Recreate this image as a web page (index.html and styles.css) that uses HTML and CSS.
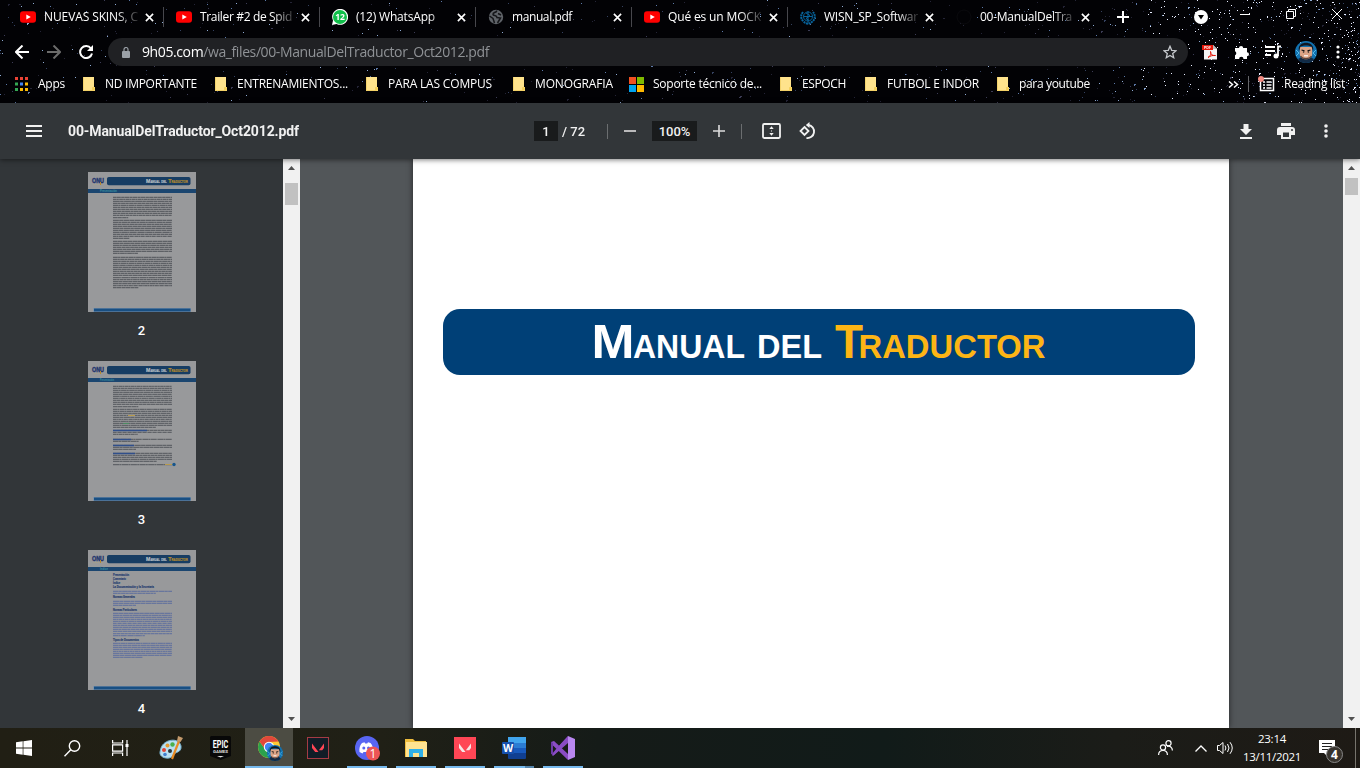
FILE: index.html
```html
<!DOCTYPE html>
<html lang="es">
<head>
<meta charset="utf-8">
<title>00-ManualDelTraductor_Oct2012.pdf</title>
<link rel="stylesheet" href="styles.css">
</head>
<body>
<svg width="0" height="0" class="defs">
  <symbol id="yt" viewBox="0 0 16 16"><rect y="2.3" width="16" height="11.4" rx="3" fill="#f00"/><path d="M6.3 5.4v5.2L10.8 8z" fill="#fff"/></symbol>
  <symbol id="x" viewBox="0 0 10 10"><path d="M1 1l8 8M9 1L1 9" stroke="#fff" stroke-width="1.8"/></symbol>
  <symbol id="folder" viewBox="0 0 12 14"><path d="M0 0h11v10h1v4H0z" fill="#ffe38c"/><path d="M.4 0v13.5H9.5V10.5h2" fill="none" stroke="#f0cd5e" stroke-width=".8"/><rect x="9.5" y="10.3" width="2.3" height="3.4" fill="#f5cf55"/></symbol>
  <symbol id="valo" viewBox="0 0 22 22"><path d="M5 6.5l6.5 8.500H8.200L5 11zM17 6.500V11l-1.800 2.200h-3.300z"/></symbol>
  <symbol id="face" viewBox="0 0 22 22"><circle cx="11" cy="11" r="11" fill="#1272b0"/><path d="M1 9l3 3-3 3M21 9l-3 3 3 3" stroke="#52b9ea" fill="none"/><path d="M3 19c3-5 13-5 16 0-4 4-12 4-16 0z" fill="#112a45"/><path d="M4.800 6h12.400v7c0 7-12.400 7-12.400 0z" fill="#dca486"/><path d="M4 10C1-1 21-1 18 10l-1.500-4.500c-3-1.500-8-1.500-11 0z" fill="#111620"/><path d="M6.500 9l3 .8M15.500 9l-3 .8" stroke="#111" stroke-width="1.200"/><circle cx="8.600" cy="11" r=".8" fill="#222"/><circle cx="13.400" cy="11" r=".8" fill="#222"/><path d="M9 14.800h4" stroke="#fff" stroke-width="1.200"/><path d="M5.500 15c2 3.500 9 3.500 11 0" stroke="#5b4238" fill="none" stroke-width="1.200"/></symbol>
</svg>

<header class="chrome">
  <canvas class="stars" id="stars" width="1360" height="103"></canvas>
  <div class="tabs">
    <div class="tab"><svg class="fav"><use href="#yt"/></svg><div class="ttl"><span data-w="94">NUEVAS SKINS, C</span></div><svg class="x"><use href="#x"/></svg></div>
    <div class="tab"><svg class="fav"><use href="#yt"/></svg><div class="ttl"><span data-w="92">Trailer #2 de Spid</span></div><svg class="x"><use href="#x"/></svg></div>
    <div class="tab"><svg class="fav" viewBox="0 0 16 16"><path d="M0 16l1-4.500A8 8 0 1 1 4.500 15z" fill="#fff"/><circle cx="8" cy="8" r="7" fill="#10c04a"/><text x="8" y="11.200" font-size="8.500" font-weight="700" text-anchor="middle" fill="#fff">12</text></svg><div class="ttl"><span data-w="79">(12) WhatsApp</span></div><svg class="x"><use href="#x"/></svg></div>
    <div class="tab"><svg class="fav" viewBox="0 0 16 16"><circle cx="8" cy="8" r="7.200" fill="#5f6368"/><path d="M8.500 1.500c1 2-4 1.500-3.500 4 .3 1.500 4 .5 4 3L12.500 9 9.500 14M1.500 7l3.500 2.500L6.500 14M10 4.500l3 1.500" stroke="#151619" stroke-width="1.500" fill="none"/></svg><div class="ttl"><span data-w="60">manual.pdf</span></div><svg class="x"><use href="#x"/></svg></div>
    <div class="tab"><svg class="fav"><use href="#yt"/></svg><div class="ttl"><span data-w="93">Qué es un MOCK</span></div><svg class="x"><use href="#x"/></svg></div>
    <div class="tab"><svg class="fav" viewBox="0 0 16 16" fill="none" stroke="#07639b"><circle cx="8" cy="7.500" r="4.500"/><path d="M3 3C-1 8 2 13 8 15c6-2 9-7 5-12" stroke-width="2" stroke-dasharray="2 .700"/><path d="M8 2v12M3.500 7.500h9M6 4l4 2.500-4 3 3 2"/></svg><div class="ttl"><span data-w="94">WISN_SP_Softwar</span></div><svg class="x"><use href="#x"/></svg></div>
    <div class="tab active"><svg class="fav" viewBox="0 0 16 16"><circle cx="8" cy="8" r="7" fill="none" stroke="#0b0b0e"/></svg><div class="ttl"><span data-w="92">00-ManualDelTra</span></div><svg class="x"><use href="#x"/></svg></div>
    <svg class="plus" viewBox="0 0 12 12"><path d="M6 0v12M0 6h12" stroke="#fff" stroke-width="2"/></svg>
    <div class="win">
      <svg width="14" height="14" viewBox="0 0 14 14"><circle cx="7" cy="7" r="7" fill="#fff"/><path d="M4 5h6L7 9.500z" fill="#000"/></svg>
      <svg width="10" height="10" viewBox="0 0 10 10"><path d="M0 5.500h10" stroke="#fff"/></svg>
      <svg width="10" height="10" viewBox="0 0 10 10" fill="none" stroke="#fff"><path d="M.5 2.500h7v7h-7zM2.500 2.500v-2h7v7h-2"/></svg>
      <svg width="10" height="10" viewBox="0 0 10 10"><path d="M0 0l10 10M10 0L0 10" stroke="#fff"/></svg>
    </div>
  </div>
  <div class="nav">
    <svg width="14" height="14" viewBox="0 0 14 14" fill="none" stroke="#fff" stroke-width="2"><path d="M14 7H1M7.500 .5L1 7l6.500 6.500"/></svg>
    <svg width="14" height="14" viewBox="0 0 14 14" fill="none" stroke="#6b6b6b" stroke-width="2"><path d="M0 7h13M6.500 .5L13 7l-6.500 6.500"/></svg>
    <svg width="14" height="14" viewBox="0 0 14 14"><path d="M12 3.500A6 6 0 1 0 13 8.500" fill="none" stroke="#fff" stroke-width="2"/><path d="M14 0v6H8z" fill="#fff"/></svg>
    <div class="omni">
      <svg width="8" height="11" viewBox="0 0 8 11"><rect y="4" width="8" height="7" rx="1" fill="#9aa0a6"/><path d="M2 4V2.500a2 2 0 0 1 4 0V4" fill="none" stroke="#9aa0a6" stroke-width="1.200"/></svg>
      <div class="url"><span data-w="347"><b>9h05.com</b>/wa_files/00-ManualDelTraductor_Oct2012.pdf</span></div>
      <svg width="14" height="14" viewBox="0 0 14 14"><path d="M7 1.300l1.700 4 4.300.400-3.300 2.800 1 4.200L7 10.500l-3.700 2.200 1-4.200L1 5.700l4.300-.400z" fill="none" stroke="#c6c9cd" stroke-width="1.300"/></svg>
    </div>
    <div class="ext">
      <svg width="16" height="16" viewBox="0 0 16 16"><path d="M2 1h9l4 4v10.500H2z" fill="#f4f4f4"/><path d="M11 1l4 4h-4z" fill="#bbb"/><rect x="0" y="1" width="11" height="5" fill="#e3170a"/><text x="2" y="4.800" font-size="3.600" font-weight="700" fill="#fff">PDF</text><path d="M6 13.500c3-2 3-4 2.500-6 0 3 2 4.500 5 4-3-.500-5 .500-7.500 2z" fill="none" stroke="#e3170a"/></svg>
      <svg width="16" height="16" viewBox="0 0 16 16"><path d="M1 4h4a2 2 0 1 1 4.200 0H13v4.200a2 2 0 1 1 0 4V15H9.500a2.200 2.200 0 0 0-4.400 0H1v-3.800a2.200 2.200 0 0 0 0-4z" fill="#fff"/></svg>
      <svg width="16" height="14" viewBox="0 0 16 14"><path d="M0 2h10M0 6h10M0 10h6M16 1.500h-3V11" fill="none" stroke="#fff" stroke-width="1.800"/><circle cx="11" cy="11" r="2.500" fill="#fff"/></svg>
      <svg width="22" height="22"><use href="#face"/></svg>
      <svg width="4" height="14" viewBox="0 0 4 14" fill="#fff"><circle cx="2" cy="2" r="1.600"/><circle cx="2" cy="7" r="1.600"/><circle cx="2" cy="12" r="1.600"/></svg>
    </div>
  </div>
  <div class="marks">
    <div class="mk apps"><svg width="13" height="14" viewBox="0 0 13 14"><path d="M0 0h3v3H0zM5 0h3v3H5zM10 0h3v3h-3z" fill="#ea4335"/><path d="M0 5.500h3v3H0z" fill="#34a853"/><path d="M5 5.500h3v3H5z" fill="#4285f4"/><path d="M10 5.500h3v3h-3zM5 11h3v3H5zM10 11h3v3h-3z" fill="#fbbc05"/><path d="M0 11h3v3H0z" fill="#34a853"/></svg><span data-w="27">Apps</span></div>
    <div class="mk"><svg class="fo"><use href="#folder"/></svg><span data-w="92">ND IMPORTANTE</span></div>
    <div class="mk"><svg class="fo"><use href="#folder"/></svg><span data-w="111">ENTRENAMIENTOS...</span></div>
    <div class="mk"><svg class="fo"><use href="#folder"/></svg><span data-w="104">PARA LAS COMPUS</span></div>
    <div class="mk"><svg class="fo"><use href="#folder"/></svg><span data-w="78">MONOGRAFIA</span></div>
    <div class="mk ms"><svg width="15" height="15" viewBox="0 0 15 15"><path d="M0 0h7v7H0z" fill="#f25022"/><path d="M8 0h7v7H8z" fill="#7fba00"/><path d="M0 8h7v7H0z" fill="#00a4ef"/><path d="M8 8h7v7H8z" fill="#ffb900"/></svg><span data-w="109">Soporte técnico de...</span></div>
    <div class="mk"><svg class="fo"><use href="#folder"/></svg><span data-w="44">ESPOCH</span></div>
    <div class="mk"><svg class="fo"><use href="#folder"/></svg><span data-w="92">FUTBOL E INDOR</span></div>
    <div class="mk"><svg class="fo"><use href="#folder"/></svg><span data-w="71">para youtube</span></div>
    <svg width="11" height="7" viewBox="0 0 11 7" fill="none" stroke="#fff" stroke-width="1.500"><path d="M1 .500l3.500 3L1 6.500M6 .500l3.500 3L6 6.500"/></svg>
    <div class="mk list"><svg width="17" height="16" viewBox="0 0 17 16"><path d="M3 2.500h12.500v12H2.500v-12z" fill="none" stroke="#fff" stroke-width="1.500"/><path d="M5 6h2M5 9h2M5 12h2M8.500 6h5M8.500 9h5M8.500 12h5" stroke="#fff" stroke-width="1.600"/><circle cx="3" cy="3" r="3" fill="#f28b82"/></svg><span data-w="61">Reading list</span></div>
  </div>
</header>

<div class="pdfbar">
  <svg width="16" height="12" viewBox="0 0 16 12"><path d="M0 1h16M0 6h16M0 11h16" stroke="#f1f1f1" stroke-width="2"/></svg>
  <div class="name"><span data-w="231">00-ManualDelTraductor_Oct2012.pdf</span></div>
  <div class="mid">
    <span class="box pg">1</span><span class="total">/ 72</span><i class="vr"></i>
    <svg class="minus" width="12" height="12" viewBox="0 0 12 12"><path d="M0 6h12" stroke="#dcdcdc" stroke-width="1.600"/></svg>
    <span class="box zm">100%</span>
    <svg class="add" width="12" height="12" viewBox="0 0 12 12"><path d="M0 6h12M6 0v12" stroke="#dcdcdc" stroke-width="1.600"/></svg>
    <i class="vr"></i>
    <svg class="fitp" width="19" height="16" viewBox="0 0 19 16"><rect x="1" y="1" width="17" height="14" rx="1.200" fill="none" stroke="#f1f1f1" stroke-width="1.800"/><path d="M9.500 3.300l2.200 2.700H7.300zM9.500 12.700l2.200-2.700H7.300zM9 7.500h1v1H9z" fill="#f1f1f1"/></svg>
    <svg class="rot" width="18" height="18" viewBox="0 0 18 18" fill="none" stroke="#f1f1f1" stroke-width="1.800"><path d="M5.500 5l4 4-4 4-4-4z"/><path d="M9.500 3a6.500 6.500 0 1 1-2 13"/><path d="M10.500 0v6L6.800 3z" fill="#f1f1f1" stroke="none"/></svg>
  </div>
  <div class="acts">
    <svg width="12" height="15" viewBox="0 0 12 15" fill="#f1f1f1"><path d="M3.500 0h5v5H12l-6 6-6-6h3.500zM0 13h12v2H0z"/></svg>
    <svg width="18" height="16" viewBox="0 0 18 16"><path d="M4 0h10v3H4zM3 4h12a3 3 0 0 1 3 3v5h-4v4H4v-4H0V7a3 3 0 0 1 3-3z" fill="#f1f1f1"/><path d="M6 9.500h6V14H6z" fill="#323639"/><circle cx="15" cy="7" r="1" fill="#323639"/></svg>
    <svg width="4" height="14" viewBox="0 0 4 14" fill="#f1f1f1"><circle cx="2" cy="2" r="1.800"/><circle cx="2" cy="7" r="1.800"/><circle cx="2" cy="12" r="1.800"/></svg>
  </div>
</div>

<main class="body">
  <aside class="side">
    <figure><svg class="thumb" data-k="0" width="108" height="140" viewBox="0 0 108 140"></svg><figcaption>2</figcaption></figure>
    <figure><svg class="thumb" data-k="1" width="108" height="140" viewBox="0 0 108 140"></svg><figcaption>3</figcaption></figure>
    <figure><svg class="thumb" data-k="2" width="108" height="140" viewBox="0 0 108 140"></svg><figcaption>4</figcaption></figure>
  </aside>
  <div class="sb a"><svg class="ar" viewBox="0 0 7 4"><path d="M0 4h7L3.500 0z" fill="#505050"/></svg><i></i><svg class="ar dn" viewBox="0 0 7 4"><path d="M0 0h7L3.500 4z" fill="#505050"/></svg></div>
  <section class="view">
    <div class="page">
      <div class="banner">
        <svg width="752" height="66" viewBox="0 0 752 66" class="head">
          <g fill="#fff"><text x="148.500" y="49" font-size="48" textLength="43" lengthAdjust="spacingAndGlyphs">M</text><text x="190" y="49" font-size="34" textLength="112" lengthAdjust="spacingAndGlyphs">ANUAL</text><text x="314" y="49" font-size="34" textLength="65" lengthAdjust="spacingAndGlyphs">DEL</text></g>
          <g fill="#fdb515"><text x="392" y="49" font-size="48" textLength="28" lengthAdjust="spacingAndGlyphs">T</text><text x="415.500" y="49" font-size="34" textLength="187" lengthAdjust="spacingAndGlyphs">RADUCTOR</text></g>
        </svg>
      </div>
    </div>
  </section>
  <div class="sb b"><svg class="ar" viewBox="0 0 7 4"><path d="M0 4h7L3.500 0z" fill="#505050"/></svg><i></i><svg class="ar dn" viewBox="0 0 7 4"><path d="M0 0h7L3.500 4z" fill="#505050"/></svg></div>
</main>

<footer class="task">
  <div class="sys"><svg width="16" height="16" viewBox="0 0 16 16" fill="#fff"><path d="M0 2.300L6.700 1.300v6.300H0zM7.400 1.200L16 0v7.600H7.400zM0 8.400h6.700v6.300L0 13.700zM7.400 8.400H16V16l-8.600-1.200z"/></svg></div>
  <div class="sys"><svg width="17" height="17" viewBox="0 0 17 17" fill="none" stroke="#fff" stroke-width="1.400"><circle cx="10.500" cy="6" r="5.200"/><path d="M6.800 9.700L.5 16.300"/></svg></div>
  <div class="sys"><svg width="17" height="16" viewBox="0 0 17 16" fill="none" stroke="#fff" stroke-width="1.200"><path d="M.6 0v3h10V0M.6 16v-3h10v3M.6 4.800h10v6.400H.6zM15 0v16"/><path d="M13.500 4h3v3h-3z" fill="#fff" stroke="none"/></svg></div>
  <div class="apps-row">
  <div class="app"><svg width="24" height="24" viewBox="0 0 24 24"><path d="M2 12C5 3 20 1 22 10c1 7-7 6-8 9-1 5-14 4-13-3z" fill="#b9dff1" stroke="#78b4d2"/><circle cx="5" cy="14" r="2" fill="#e04436"/><circle cx="8.500" cy="9.500" r="2" fill="#e59b31"/><circle cx="13.500" cy="8.500" r="2.200" fill="#4ab04b"/><circle cx="11" cy="15" r="2" fill="#26333a"/><circle cx="6" cy="18.500" r="1.800" fill="#3f7fd0"/><path d="M13 23l7-18" stroke="#e88b24" stroke-width="2.200"/><path d="M18 5l1-5 5 2-2.500 4z" fill="#c49a6c"/></svg></div>
  <div class="app"><svg width="21" height="24" viewBox="0 0 21 24"><path d="M1.500 0h18a1.500 1.500 0 0 1 1.500 1.500V20l-10.500 4L0 20V1.500A1.500 1.500 0 0 1 1.500 0z" fill="#080808"/><text x="2.800" y="12" font-size="11.500" font-weight="700" fill="#fff" textLength="15.500" lengthAdjust="spacingAndGlyphs" font-family="Roboto">EPIC</text><text x="3" y="17.300" font-size="4" font-weight="700" fill="#ddd" textLength="15" lengthAdjust="spacingAndGlyphs" font-family="Roboto">GAMES</text><path d="M7 20h7l-3.500 1.500z" fill="#ddd"/></svg></div>
  <div class="app on"><svg width="26" height="26" viewBox="0 0 26 26"><circle cx="12" cy="12" r="11" fill="#fcc934"/><path d="M2.500 6.500A11 11 0 0 0 12 23l4-8-8-1z" fill="#2ba24c"/><path d="M2.500 6.500A11 11 0 0 1 21.500 6.500L12 7l-4 7z" fill="#e0483b"/><circle cx="12" cy="12" r="5.200" fill="#fff"/><circle cx="12" cy="12" r="4.200" fill="#4285f4"/><svg x="10" y="10" width="16" height="16"><use href="#face"/></svg></svg></div>
  <div class="app"><svg width="22" height="22" viewBox="0 0 22 22"><rect x=".5" y=".5" width="21" height="21" fill="#111d27" stroke="#a53b45"/><use href="#valo" fill="#ff4655"/></svg></div>
  <div class="app run"><svg width="26" height="26" viewBox="0 0 26 26"><circle cx="13" cy="13" r="12" fill="#5865f2"/><path d="M5.500 17c-.5-4 .5-7 2.500-9l2.500-.7.7 1.200h2l.8-1.200 2.500.7c2 2 3 5 2.500 9l-3 1.500-1-1.500H9.500l-1 1.500z" fill="#fff"/><circle cx="9.800" cy="13" r="1.500" fill="#5865f2"/><circle cx="14.500" cy="13" r="1.500" fill="#5865f2"/><circle cx="19" cy="18.500" r="7" fill="#ed5555"/><text x="19" y="23" font-size="12" text-anchor="middle" fill="#fff">1</text></svg></div>
  <div class="app run"><svg width="22" height="20" viewBox="0 0 22 20"><path d="M0 1h8l2 2h11v16H0z" fill="#efbd3d"/><path d="M1 4h21v15H1z" fill="#ffe391"/><path d="M4 19v-8h14v8h-4v-4H8v4z" fill="#2fb0e8"/></svg></div>
  <div class="app run"><svg width="22" height="22" viewBox="0 0 22 22"><rect width="22" height="22" fill="#ff4655"/><use href="#valo" fill="#f5e6e6"/></svg></div>
  <div class="app run word"><svg width="24" height="22" viewBox="0 0 24 22"><rect x="6" width="18" height="22" rx="1" fill="#103f91"/><path d="M6 0h18v6H6z" fill="#41a5ee"/><path d="M6 6h18v5H6z" fill="#2b7cd3"/><path d="M6 11h18v5H6z" fill="#185abd"/><rect y="5" width="12" height="12" rx="1" fill="#1650ad"/><text x="6" y="14.800" font-size="10.500" font-weight="700" text-anchor="middle" fill="#fff" font-family="Open Sans">W</text></svg></div>
  <div class="app run"><svg width="24" height="24" viewBox="0 0 24 24"><path d="M17 0l7 3v18l-7 3z" fill="#b987f0"/><path d="M0 6l3-1 14 13v6L2 9.500z" fill="#8a4cc4"/><path d="M17 0v6L3 19l-3-1V6l2 1v9.500z" fill="#6c3aa5"/><path d="M17 0v7L2 20l-1-1 5-7z" fill="#8a4cc4"/></svg></div>
  </div>
  <div class="tray">
    <svg class="ppl" width="15" height="16" viewBox="0 0 15 16" fill="none" stroke="#fff" stroke-width="1.200"><circle cx="5" cy="7.500" r="2.600"/><path d="M.600 15c0-6 8.800-6 8.800 0"/><circle cx="10.500" cy="3.200" r="2.600"/><path d="M9 6.500c3-1 5.400 1 5.400 4"/></svg>
    <svg class="chev" width="12" height="7" viewBox="0 0 12 7" fill="none" stroke="#fff" stroke-width="1.300"><path d="M.5 6.500L6 1l5.500 5.500"/></svg>
    <svg class="vol" width="17" height="14" viewBox="0 0 17 14" fill="none" stroke="#fff"><path d="M.5 4.500h2L6 1.500v11L2.500 9.500h-2z"/><path d="M8 4.500q1.800 2.500 0 5M10.500 3q3 4 0 8M13 1.200q4.500 5.800 0 11.600"/></svg>
    <div class="clock"><span data-w="28">23:14</span><span data-w="58">13/11/2021</span></div>
    <div class="note"><svg width="16" height="17" viewBox="0 0 16 17"><path d="M0 0h16v13H9v4l-4-4H0z" fill="#fff"/><path d="M3 3.500h10M3 6.500h10M3 9.500h7" stroke="#222"/></svg><em>4</em></div>
    <i class="end"></i>
  </div>
</footer>
<script src="app.js"></script>
</body>
</html>
```
FILE: styles.css
```css
* { box-sizing: border-box; }
body { margin: 0; width: 1360px; height: 768px; overflow: hidden; display: flex; flex-direction: column; font-family: "Open Sans", "Noto Sans", sans-serif; font-size: 12px; color: #fff; background: #525659; }
svg { display: block; flex: none; }
.defs { position: absolute; }
span { white-space: nowrap; }
.chrome { position: relative; height: 103px; flex: none; background: #020205; }
.stars { position: absolute; left: 0; top: 0; }
.tabs, .nav, .marks { position: relative; display: flex; align-items: center; }
.tabs { height: 38px; padding: 0 0 4px 8px; }
.tab { width: 156px; height: 20px; padding-left: 12px; display: flex; align-items: center; border-right: 1px solid #47474c; }
.tab:nth-child(6), .tab.active { border-color: transparent; }
.fav { width: 16px; height: 16px; }
.ttl { width: 96px; margin-left: 8px; overflow: hidden; line-height: 20px; -webkit-mask-image: linear-gradient(90deg, #000 72px, transparent 98px); mask-image: linear-gradient(90deg, #000 72px, transparent 98px); }
.x { width: 9px; height: 9px; margin-left: 5px; }
.plus { width: 12px; height: 12px; margin-left: 17px; }
.win { display: grid; grid-template-columns: 46px 46px 46px 10px; margin-left: 65px; align-items: center; padding-bottom: 6px; }
.win svg:first-child { margin-top: 6px; }
.nav { height: 28px; padding-left: 15px; gap: 18px; }
.omni { width: 1080px; height: 28px; margin-left: -3px; padding: 0 11px 0 14px; border-radius: 14px; background: #202124; display: flex; align-items: center; }
.url { flex: 1; margin-left: 12px; font-size: 14px; line-height: 26px; color: #8f9296; }
.url b { font-weight: 400; color: #fff; }
.ext { display: grid; grid-template-columns: 32px 31px 30px 41px 4px; align-items: center; margin-left: -4px; }
.marks { height: 36px; padding-left: 15px; display: grid; grid-template-columns: 68px 132px 151px 147px 116px 151px 85px 132px 231px 20px 1fr; }
.mk { display: flex; align-items: center; line-height: 18px; }
.mk span { margin-left: 10px; }
.mk.ms span { margin-left: 9px; }
.fo { width: 12px; height: 14px; }
.list { border-left: 1px solid #66666a; padding-left: 9px; height: 16px; }
.list span { margin-left: 9px; }

.pdfbar { position: relative; z-index: 2; height: 56px; flex: none; display: grid; grid-template-columns: 42px 466px 706px 1fr; align-items: center; padding-left: 26px; background: #323639; box-shadow: 0 1px 5px rgba(0,0,0,.5); font-family: Roboto, sans-serif; font-weight: 500; color: #f1f1f1; font-size: 14px; }
.name { font-weight: 700; font-size: 14px; }
.mid { display: flex; align-items: center; font-size: 13px; }
.box { background: #191b1c; height: 20px; line-height: 21px; text-align: center; }
.pg { width: 24px; }
.zm { width: 45px; }
.total { width: 45px; margin-left: 4px; }
.vr { width: 1px; height: 15px; background: #6b6e70; }
.minus { margin: 0 16px; }
.add { margin: 0 16px; }
.fitp { margin-left: 20px; }
.rot { margin-left: 18px; }
.acts { display: grid; grid-template-columns: 37px 47px 4px; align-items: center; }

.body { flex: 1; display: flex; min-height: 0; }
.side { width: 283px; background: #323639; padding: 13px 0 0 88px; overflow: hidden; }
figure { margin: 0; width: 108px; height: 189px; }
.thumb { background: #98999b; }
figcaption { padding-right: 1px; text-align: center; font-family: Roboto, sans-serif; font-weight: 500; font-size: 13px; line-height: 37px; }
.sb { width: 17px; background: #f1f1f1; display: flex; flex-direction: column; align-items: center; padding: 7px 0; }
.sb i { width: 13px; background: #c1c1c1; }
.a i { height: 22px; margin-top: 13px; }
.b i { height: 17px; margin-top: 8px; }
.ar { width: 7px; height: 4px; }
.dn { margin-top: auto; }
.view { width: 1043px; padding-left: 113px; background: #525659; }
.page { width: 816px; height: 569px; background: #fff; padding: 150px 0 0 30px; box-shadow: 0 0 6px rgba(0,0,0,.55); clip-path: inset(0 -8px); }
.banner { width: 752px; height: 66px; border-radius: 17px; background: #004077; }
.head { font-family: "Liberation Sans", Arial, sans-serif; font-weight: 700; }

.task { height: 40px; flex: none; display: flex; background: linear-gradient(90deg, #211f14 0, #202016 28%, #151b18 44%, #111b19 65%, #1b1c18 82%, #1e1a15 100%); }
.sys { width: 48px; display: flex; justify-content: center; align-items: center; }
.apps-row { display: flex; gap: 1px; padding-left: 3px; }
.app { width: 48px; display: flex; justify-content: center; align-items: center; }
.on { background: #4c4c43; border-bottom: 2px solid #76b9ed; padding: 2px 0 0 2px; }
.run { background: linear-gradient(#76b9ed, #76b9ed) 4px 100% / 40px 2px no-repeat; }
.word { background: linear-gradient(90deg, #76b9ed 31px, #5585ab 31px) 4px 100% / 40px 2px no-repeat; }
.tray { margin-left: auto; display: flex; align-items: center; }
.ppl { margin-right: 1px; }
.chev { margin-left: 21px; }
.vol { margin-left: 10px; }
.clock { width: 76px; display: flex; flex-direction: column; align-items: center; line-height: 18px; font-size: 11.500px; }
.note { position: relative; margin-left: 9px; width: 36px; }
.note em { position: absolute; left: 7px; top: 6px; width: 17px; height: 17px; border: 1px solid #888; border-radius: 50%; background: #37332d; font: 700 12px/15px "Open Sans", sans-serif; text-align: center; }
.end { width: 1px; height: 40px; background: #77746d; margin-right: 4px; }
```
FILE: app.js
```js
// Spread each label over its column width
document.querySelectorAll('[data-w]').forEach(function (el) {
  el.style.display = 'inline-block';
  var w = el.getBoundingClientRect().width;
  el.style.letterSpacing = ((+el.dataset.w - w) / el.textContent.length) + 'px';
});

var seed = 7;
function rnd() { seed = (seed * 16807) % 2147483647; return seed / 2147483647; }

// Starfield theme, denser towards the right edge
var c = document.getElementById('stars').getContext('2d');
var tones = ['#34415f', '#5c79a8', '#8eaad2', '#242436', '#242436', '#3c3c55'];
for (var i = 0; i < 1300; i++) {
  var x = Math.floor(1360 * (i < 650 ? rnd() : 1 - rnd() * rnd() * 0.35));
  var y = Math.floor(rnd() * 103);
  c.fillStyle = x > 1140 && rnd() > 0.5 ? '#e8edff' : tones[Math.floor(rnd() * 6)];
  var s = rnd() > 0.94 ? 2 : 1;
  c.fillRect(x, y, s, 1);
  if (s === 2 && rnd() > 0.5) c.fillRect(x, y + 1, 1, 1);
}

// Page thumbnails: shared letterhead plus paragraphs given as [first row, row count]
var docs = [
  { t: 'Presentación', col: '#5d6065', rows: [[25.3, 11], [48.3, 10], [69.3, 7], [85.3, 16]] },
  { t: 'Presentación', col: '#606368', rows: [[25.3, 11], [48.3, 10], [69.300, 3], [78.300, 2], [84.300, 3], [92.300, 5], [103.500, 1]] },
  { t: 'Índice', col: '#68769d', rows: [[41.300, 2], [51.300, 3], [63.300, 12], [93.300, 8]] }
];
var heads = [[26, 16, 'Presentación'], [30, 13, 'Comentario'], [34, 7, 'Índice'], [38, 41, 'La Documentación y la Secretaría'], [48, 22, 'Normas Generales'], [61, 24, 'Normas Particulares'], [91, 26, 'Tipos de Documentos']];
function cap(x, size, len, fill, txt) {
  return '<text x="' + x + '" y="11" font-size="' + size + '" fill="' + fill + '" stroke="' + fill + '" stroke-width=".2" textLength="' + len + '" lengthAdjust="spacingAndGlyphs">' + txt + '</text>';
}
document.querySelectorAll('.thumb').forEach(function (s) {
  var k = +s.dataset.k, d = docs[k];
  var h = '<g font-family="Liberation Sans" font-weight="700"><text x="4" y="11.200" font-size="7" fill="#22356d" stroke="#22356d" stroke-width=".4" textLength="12" lengthAdjust="spacingAndGlyphs">ONU</text><path d="M5 12.500h10" stroke="#aaa184" stroke-width=".5"/><path d="M12.500 10v3" stroke="#b98a2c"/>' +
    '<rect x="19" y="5" width="83.500" height="8.200" rx="1.800" fill="#173d63"/>' +
    cap(58, 5, 4.4, '#b5bcc2', 'M') + cap(62.4, 3.6, 9.6, '#b5bcc2', 'ANUAL') + cap(73.2, 3.6, 5.6, '#b5bcc2', 'DEL') +
    cap(80.3, 5, 3.2, '#af8a32', 'T') + cap(83.5, 3.6, 16.3, '#af8a32', 'RADUCTOR') +
    '<rect y="17" width="108" height="4" fill="#1b4670"/><text x="12" y="20.200" font-size="3.300" fill="#3c93a2" textLength="' + (k === 2 ? 8 : k ? 14 : 17) + '" lengthAdjust="spacingAndGlyphs">' + d.t + '</text></g>' +
    '<rect x="5" y="136" width="98" height="4" fill="#7e94aa"/><rect x="6" y="136.500" width="96.500" height="3" fill="#184f83"/>';
  d.rows.forEach(function (r) {
    for (var j = 0; j < r[1]; j++) {
      var end = j === r[1] - 1 && r[1] > 1 ? 40 + rnd() * 30 : 84;
      h += '<path d="M25 ' + (r[0] + j * 2.020) + 'H' + end.toFixed(1) + '" stroke="' + d.col + '" stroke-width="1.250" stroke-dasharray="' + (3 + rnd() * 4).toFixed(1) + ' .3 ' + (1 + rnd() * 4).toFixed(1) + ' .4"/>';
    }
  });
  if (k === 1) h += '<path d="M25 69.500h34M25 78.500h18M25 84.500h21M25 92.500h22" stroke="#304f8b" stroke-width="1.400"/><path d="M40 54.500h7M77 103.500h7" stroke="#b79a4c"/><path d="M35 62.500h6" stroke="#4b8b62"/><circle cx="86" cy="103.500" r="1.700" fill="#17568c"/>';
  if (k === 2) heads.forEach(function (a) {
    h += '<text x="25" y="' + a[0] + '" font-size="2.900" font-weight="700" font-family="Liberation Sans" fill="#263d70" stroke="#263d70" stroke-width=".15" textLength="' + a[1] + '" lengthAdjust="spacingAndGlyphs">' + a[2] + '</text>';
  });
  s.innerHTML = h;
});
```
